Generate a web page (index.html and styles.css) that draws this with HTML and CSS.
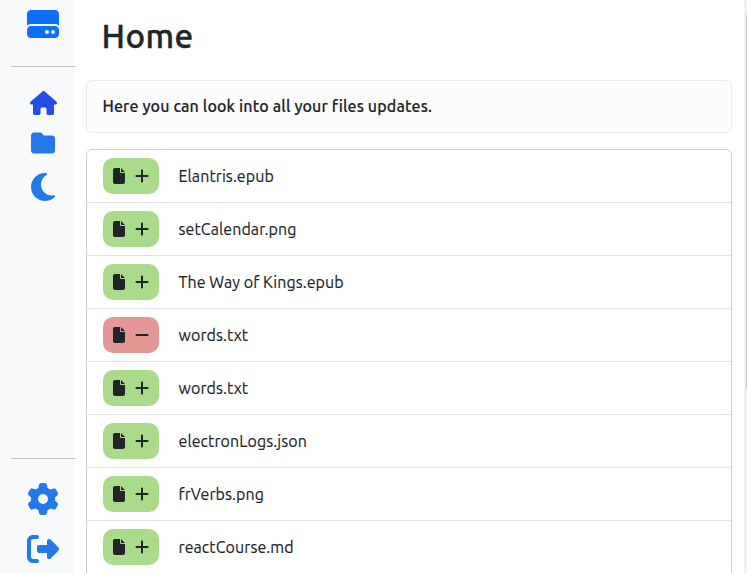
FILE: index.html
```html
<!DOCTYPE html>
<html lang="en">
<head>
<meta charset="utf-8">
<title>Home</title>
<link rel="stylesheet" href="styles.css">
</head>
<body>
<svg class="defs" aria-hidden="true">
  <symbol id="file" viewBox="0 0 384 512"><path d="M0 64C0 28.700 28.700 0 64 0H224V128c0 17.700 14.300 32 32 32H384V448c0 35.300-28.700 64-64 64H64c-35.300 0-64-28.700-64-64V64zm384 64H256V0L384 128z"/></symbol>
  <symbol id="plus" viewBox="0 0 448 512"><path d="M256 80c0-17.700-14.300-32-32-32s-32 14.300-32 32V224H48c-17.700 0-32 14.300-32 32s14.300 32 32 32H192V432c0 17.700 14.300 32 32 32s32-14.300 32-32V288H400c17.700 0 32-14.300 32-32s-14.300-32-32-32H256V80z"/></symbol>
  <symbol id="minus" viewBox="0 0 448 512"><path d="M432 256c0 17.700-14.300 32-32 32H48c-17.700 0-32-14.300-32-32s14.300-32 32-32H400c17.700 0 32 14.300 32 32z"/></symbol>
</svg>
<div class="app">
  <nav class="sidebar">
    <div class="brand">
      <svg class="icon-lg" viewBox="0 0 512 512"><path d="M0 96C0 60.700 28.700 32 64 32H448c35.300 0 64 28.700 64 64V280.400c-17-15.200-39.400-24.400-64-24.400H64c-24.600 0-47 9.200-64 24.400V96zM64 288H448c35.300 0 64 28.700 64 64v64c0 35.300-28.700 64-64 64H64c-35.300 0-64-28.700-64-64V352c0-35.300 28.700-64 64-64zM320 416a32 32 0 1 0 0-64 32 32 0 1 0 0 64zm128-32a32 32 0 1 0 -64 0 32 32 0 1 0 64 0z"/></svg>
    </div>
    <div class="links">
      <svg class="home" viewBox="0 0 576 512"><path d="M575.8 255.5c0 18-15 32.1-32 32.1h-32l.7 160.2c0 2.7-.2 5.4-.5 8.1V472c0 22.1-17.9 40-40 40H456c-1.1 0-2.2 0-3.3-.1c-1.4 .1-2.8 .1-4.2 .1H416 392c-22.1 0-40-17.9-40-40V448 384c0-17.7-14.3-32-32-32H256c-17.7 0-32 14.3-32 32v64 24c0 22.1-17.9 40-40 40H160 128.1c-1.5 0-3-.1-4.5-.2c-1.2 .1-2.4 .2-3.6 .2H104c-22.1 0-40-17.9-40-40V360c0-.9 0-1.9 .1-2.8V287.6H32c-18 0-32-14-32-32.1c0-9 3-17 10-24L266.400 8c7-7 15-8 22-8s15 2 21 7L564.800 231.500c8 7 12 15 11 24z"/></svg>
      <svg class="folder" viewBox="0 0 512 512"><path d="M64 480H448c35.300 0 64-28.700 64-64V160c0-35.300-28.700-64-64-64H288c-10.100 0-19.600-4.700-25.600-12.800L243.200 57.600C231.100 41.500 212.100 32 192 32H64C28.700 32 0 60.700 0 96V416c0 35.300 28.700 64 64 64z"/></svg>
      <svg class="moon" viewBox="0 0 384 512"><path d="M223.500 32C100 32 0 132.300 0 256S100 480 223.500 480c60.600 0 115.500-24.200 155.800-63.400c5-4.900 6.300-12.500 3.100-18.700s-10.100-9.700-17-8.500c-9.800 1.700-19.800 2.600-30.100 2.600c-96.900 0-175.500-78.800-175.500-176c0-65.800 36-123.100 89.300-153.300c6.100-3.500 9.200-10.500 7.700-17.300s-7.300-11.900-14.300-12.500c-6.300-.5-12.600-.8-19-.8z"/></svg>
    </div>
    <div class="bottom">
      <svg class="icon-lg" viewBox="0 0 512 512"><path d="M495.9 166.6c3.2 8.7 .5 18.4-6.400 24.600l-43.300 39.400c1.100 8.300 1.700 16.800 1.700 25.400s-.6 17.100-1.700 25.400l43.300 39.400c6.900 6.200 9.600 15.900 6.400 24.600c-4.400 11.900-9.700 23.300-15.800 34.300l-4.700 8.100c-6.600 11-14 21.400-22.100 31.200c-5.900 7.200-15.700 9.600-24.500 6.800l-55.700-17.700c-13.400 10.300-28.200 18.900-44 25.400l-12.500 57.100c-2 9.100-9 16.300-18.200 17.800c-13.800 2.300-28 3.500-42.500 3.500s-28.700-1.200-42.500-3.500c-9.200-1.500-16.200-8.700-18.200-17.800l-12.500-57.100c-15.800-6.500-30.600-15.100-44-25.400L83.100 425.900c-8.800 2.800-18.600 .3-24.500-6.800c-8.100-9.800-15.500-20.200-22.100-31.200l-4.700-8.100c-6.100-11-11.400-22.400-15.800-34.300c-3.200-8.700-.5-18.400 6.400-24.600l43.300-39.400C64.600 273.100 64 264.600 64 256s.6-17.100 1.700-25.400L22.400 191.200c-6.900-6.200-9.600-15.900-6.400-24.600c4.400-11.900 9.700-23.300 15.800-34.300l4.700-8.100c6.600-11 14-21.400 22.100-31.200c5.900-7.200 15.700-9.600 24.500-6.800l55.700 17.700c13.400-10.300 28.200-18.900 44-25.400l12.500-57.100c2-9.100 9-16.300 18.200-17.800C227.300 1.200 241.500 0 256 0s28.700 1.200 42.500 3.500c9.200 1.500 16.200 8.700 18.200 17.800l12.500 57.100c15.800 6.500 30.600 15.100 44 25.400l55.700-17.700c8.800-2.800 18.600-.3 24.500 6.800c8.100 9.800 15.500 20.200 22.100 31.200l4.700 8.100c6.100 11 11.400 22.400 15.800 34.300zM256 336a80 80 0 1 0 0-160 80 80 0 1 0 0 160z"/></svg>
      <svg class="icon-lg" viewBox="0 0 512 512"><path d="M377.900 105.900L500.700 228.700c7.200 7.200 11.300 17.100 11.300 27.300s-4.100 20.100-11.300 27.300L377.900 406.100c-6.400 6.400-15 9.900-24 9.900c-18.700 0-33.900-15.200-33.900-33.900l0-62.100-128 0c-17.700 0-32-14.300-32-32l0-64c0-17.700 14.300-32 32-32l128 0 0-62.100c0-18.700 15.200-33.900 33.900-33.900c9 0 17.600 3.600 24 9.900zM160 96L96 96c-17.700 0-32 14.300-32 32l0 256c0 17.700 14.300 32 32 32l64 0c17.700 0 32 14.300 32 32s-14.300 32-32 32l-64 0c-53 0-96-43-96-96L0 128C0 75 43 32 96 32l64 0c17.700 0 32 14.300 32 32s-14.300 32-32 32z"/></svg>
    </div>
  </nav>
  <main class="content">
    <h1>Home</h1>
    <p class="notice">Here you can look into all your files updates.</p>
    <ul class="files">
      <li><span class="badge"><svg class="f"><use href="#file"/></svg><svg class="s"><use href="#plus"/></svg></span><span class="name">Elantris.epub</span></li>
      <li><span class="badge"><svg class="f"><use href="#file"/></svg><svg class="s"><use href="#plus"/></svg></span><span class="name">setCalendar.png</span></li>
      <li><span class="badge"><svg class="f"><use href="#file"/></svg><svg class="s"><use href="#plus"/></svg></span><span class="name">The Way of Kings.epub</span></li>
      <li><span class="badge removed"><svg class="f"><use href="#file"/></svg><svg class="s"><use href="#minus"/></svg></span><span class="name">words.txt</span></li>
      <li><span class="badge"><svg class="f"><use href="#file"/></svg><svg class="s"><use href="#plus"/></svg></span><span class="name">words.txt</span></li>
      <li><span class="badge"><svg class="f"><use href="#file"/></svg><svg class="s"><use href="#plus"/></svg></span><span class="name">electronLogs.json</span></li>
      <li><span class="badge"><svg class="f"><use href="#file"/></svg><svg class="s"><use href="#plus"/></svg></span><span class="name">frVerbs.png</span></li>
      <li><span class="badge"><svg class="f"><use href="#file"/></svg><svg class="s"><use href="#plus"/></svg></span><span class="name">reactCourse.md</span></li>
    </ul>
  </main>
  <div class="scrollbar"><div class="thumb"></div></div>
</div>
</body>
</html>
```
FILE: styles.css
```css
* { box-sizing: border-box; }
body {
  margin: 0;
  overflow: hidden;
  background: #fff;
  color: #212529;
  font: 16px/24px Ubuntu, "Noto Sans", sans-serif;
}
svg { display: block; fill: currentColor; flex: none; }
.defs { display: none; }
.app { display: flex; height: 573px; overflow: hidden; }

.sidebar {
  display: flex;
  flex-direction: column;
  flex: none;
  width: 74px;
  background: #f8f9fb;
  color: #2479e8;
}
.brand {
  width: 64px;
  height: 67px;
  margin-left: 11px;
  padding: 8px 16px 0;
  border-bottom: 1px solid #c1c2c5;
  color: #0d6efd;
}
.icon-lg { width: 32px; height: 32px; }
.links {
  display: flex;
  flex-direction: column;
  align-items: center;
  width: 64px;
  margin-left: 11px;
  padding-top: 24px;
  gap: 16px;
}
.home { width: 27px; height: 24px; color: #254ce6; }
.folder { width: 24px; height: 24px; }
.moon { width: 24px; height: 32px; }
.bottom {
  display: flex;
  flex-direction: column;
  align-items: center;
  gap: 18px;
  width: 64px;
  height: 115px;
  margin: auto 0 0 11px;
  padding-top: 24px;
  border-top: 1px solid #c1c2c5;
}

.content { flex: 1; min-width: 0; padding: 0 12px; }
h1 {
  margin: 0;
  height: 80px;
  padding: 12px 0 0 15.5px;
  font-size: 33.2px;
  font-weight: 500;
  line-height: 48px;
  letter-spacing: 0.4px;
  -webkit-text-stroke: 0.4px #212529;
}
.notice {
  margin: 0 0 16px;
  height: 53px;
  padding: 13px 15.5px;
  border: 1px solid #e9ebef;
  border-radius: 6px;
  background: #fcfcfc;
  font-weight: 500;
  letter-spacing: 0.135px;
  -webkit-text-stroke: 0.15px #212529;
  white-space: nowrap;
}
.files {
  margin: 0;
  padding: 0 0 16px;
  list-style: none;
  border: 1px solid #cfcfd0;
  border-radius: 6px;
}
.files li {
  display: flex;
  align-items: center;
  gap: 19.5px;
  height: 53px;
  padding: 0 16px;
  border-bottom: 1px solid #dee2e6;
}
.badge {
  display: flex;
  align-items: center;
  gap: 10px;
  width: 56px;
  height: 36px;
  padding: 0 10px;
  border-radius: 10px;
  background: #a9db8a;
}
.removed { background: #e39896; }
.f { width: 12px; height: 16px; }
.s { width: 14px; height: 16px; }
.name {
  white-space: nowrap;
  letter-spacing: 0.08px;
  -webkit-text-stroke: 0.15px #212529;
}

.scrollbar { flex: none; width: 3px; padding: 15px 0 0 2px; background: #f1f1f1; }
.thumb { height: 374px; background: #c1c1c1; }
```
